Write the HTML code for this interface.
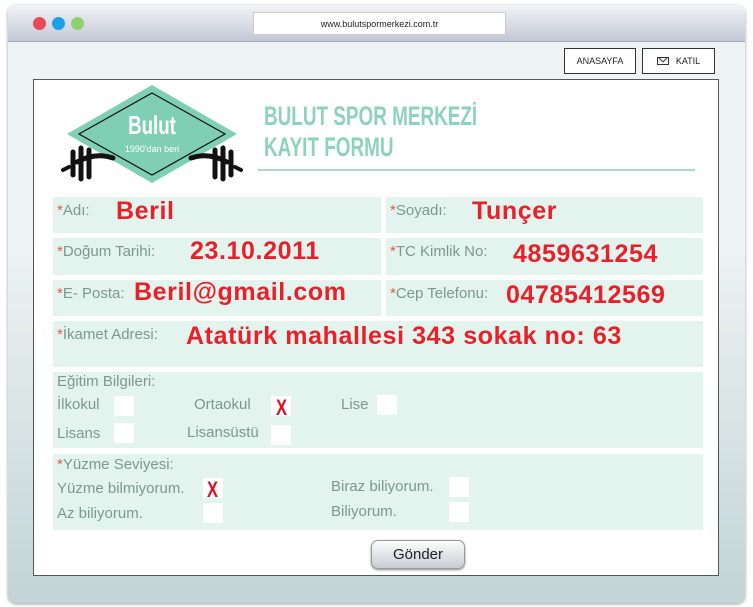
<!DOCTYPE html>
<html><head><meta charset="utf-8"><style>
*{margin:0;padding:0;box-sizing:border-box}
body{width:753px;height:607px;background:#fff;position:relative;overflow:hidden;font-family:"Liberation Sans",sans-serif}
.frame{position:absolute;left:8px;top:5px;width:737px;height:598px;border-radius:8px;background:linear-gradient(#eef3f3 40%,#c2d4d6);box-shadow:0 1px 3px #999;overflow:hidden}
.bar{position:absolute;left:0;top:0;width:100%;height:37px;background:linear-gradient(#f2f3f6,#c3c8d6);border-bottom:1px solid #aab}
.dot{position:absolute;top:12px;width:13px;height:13px;border-radius:50%}
.url{position:absolute;left:245px;top:7px;width:253px;height:23px;background:#fff;border:1px solid #ccc;font-size:9px;text-align:center;line-height:22px;color:#222}
.btn{position:absolute;top:43px;height:26px;border:1px solid #333;background:#fff;font-size:9px;line-height:24px;text-align:center;color:#222}
.inner{position:absolute;left:25px;top:74px;width:686px;height:497px;background:#fff;border:1px solid #555}
.f{position:absolute;background:#e3f3ed;color:#7a9a8f;font-size:15px}
.f .l{position:absolute;left:4px;top:5px}
.f .l b{color:#e25a4a;font-weight:normal}
.v{position:absolute;color:#e8202a;font-weight:bold;font-size:25px;letter-spacing:.6px}
.cb{position:absolute;width:20px;height:20px;background:#fff}
.x{position:absolute;color:#e01020;font-weight:bold;font-size:22px;transform:scaleX(.75);transform-origin:left}
.t{position:absolute;font-size:15px;color:#7a9a8f}
</style></head><body>
<div class="frame">
<div class="bar">
<div class="dot" style="left:25px;background:#e94a5a"></div>
<div class="dot" style="left:44px;background:#1ea0e8"></div>
<div class="dot" style="left:63px;background:#8fd070"></div>
<div class="url">www.bulutspormerkezi.com.tr</div>
</div>
<div class="btn" style="left:556px;width:72px">ANASAYFA</div>
<div class="btn" style="left:634px;width:73px"><span style="display:inline-block;width:12px;height:8px;border:1px solid #333;vertical-align:-1px;margin-right:7px;position:relative;overflow:hidden"><span style="position:absolute;left:1px;top:-5px;width:8px;height:8px;border:1px solid #333;transform:rotate(45deg)"></span></span>KATIL</div>
</div>
<div class="inner" style="left:33px;top:79px"></div>
<svg style="position:absolute;left:55px;top:82px" width="195" height="105">
<polygon points="97,3 182,52 97,101 12,52" fill="#7fcfb4"/>
<polygon points="97,11 170,52 97,93 24,52" fill="none" stroke="#111" stroke-width="1.2"/>
<text x="97" y="52" font-family="Liberation Sans" font-weight="bold" font-size="26" fill="#fff" text-anchor="middle" transform="translate(97,0) scale(0.72,1) translate(-97,0)">Bulut</text>
<text x="97" y="70" font-size="9" fill="#fff" text-anchor="middle" font-family="Liberation Sans">1990'dan beri</text>
<g stroke="#111" stroke-linecap="round" fill="none">
<path d="M22,80 Q40,70 58,76" stroke-width="5"/><path d="M172,80 Q154,70 136,76" stroke-width="5"/>
<path d="M18,70 V93 M26,66 V97 M34,68 V95" stroke-width="5"/>
<path d="M176,70 V93 M168,66 V97 M160,68 V95" stroke-width="5"/>
<path d="M8,88 L14,85 M186,88 L180,85" stroke-width="4"/>
</g></svg>
<div style="position:absolute;left:264px;top:101px;color:#8dd3bb;font-family:'Liberation Sans',sans-serif;font-weight:bold;font-size:27px;line-height:31px;transform:scaleX(.7);transform-origin:left;white-space:nowrap">BULUT SPOR MERKEZİ<br>KAYIT FORMU</div>
<div style="position:absolute;left:258px;top:169px;width:437px;height:2px;background:#a8dcca"></div>

<div class="f" style="left:53px;top:197px;width:328px;height:36px"><span class="l"><b>*</b>Adı:</span></div>
<div class="v" style="left:116px;top:197px">Beril</div>
<div class="f" style="left:386px;top:197px;width:317px;height:36px"><span class="l"><b>*</b>Soyadı:</span></div>
<div class="v" style="left:472px;top:197px">Tunçer</div>
<div class="f" style="left:53px;top:238px;width:328px;height:37px"><span class="l"><b>*</b>Doğum Tarihi:</span></div>
<div class="v" style="left:190px;top:237px">23.10.2011</div>
<div class="f" style="left:386px;top:238px;width:317px;height:37px"><span class="l"><b>*</b>TC Kimlik No:</span></div>
<div class="v" style="left:513px;top:240px">4859631254</div>
<div class="f" style="left:53px;top:280px;width:328px;height:36px"><span class="l"><b>*</b>E- Posta:</span></div>
<div class="v" style="left:134px;top:278px">Beril@gmail.com</div>
<div class="f" style="left:386px;top:280px;width:317px;height:36px"><span class="l"><b>*</b>Cep Telefonu:</span></div>
<div class="v" style="left:506px;top:281px">04785412569</div>
<div class="f" style="left:53px;top:321px;width:650px;height:46px"><span class="l"><b>*</b>İkamet Adresi:</span></div>
<div class="v" style="left:186px;top:322px">Atatürk mahallesi 343 sokak no: 63</div>

<div class="f" style="left:53px;top:372px;width:650px;height:76px"><span class="l" style="top:1px">Eğitim Bilgileri:</span></div>
<div class="t" style="left:57px;top:396px">İlkokul</div><div class="cb" style="left:114px;top:396px"></div>
<div class="t" style="left:194px;top:396px">Ortaokul</div><div class="cb" style="left:271px;top:396px"></div><div class="x" style="left:276px;top:395px">X</div>
<div class="t" style="left:341px;top:396px">Lise</div><div class="cb" style="left:377px;top:395px"></div>
<div class="t" style="left:57px;top:425px">Lisans</div><div class="cb" style="left:114px;top:423px"></div>
<div class="t" style="left:187px;top:424px">Lisansüstü</div><div class="cb" style="left:271px;top:425px"></div>

<div class="f" style="left:53px;top:454px;width:650px;height:76px"><span class="l" style="top:2px"><b>*</b>Yüzme Seviyesi:</span></div>
<div class="t" style="left:57px;top:480px">Yüzme bilmiyorum.</div><div class="cb" style="left:203px;top:478px"></div><div class="x" style="left:207px;top:477px">X</div>
<div class="t" style="left:331px;top:478px">Biraz biliyorum.</div><div class="cb" style="left:449px;top:477px"></div>
<div class="t" style="left:57px;top:505px">Az biliyorum.</div><div class="cb" style="left:203px;top:503px"></div>
<div class="t" style="left:331px;top:503px">Biliyorum.</div><div class="cb" style="left:449px;top:502px"></div>

<div style="position:absolute;left:371px;top:540px;width:94px;height:29px;border-radius:7px;border:1px solid #999;background:linear-gradient(#fdfdfd,#c9ccd3);box-shadow:0 1px 2px #888;text-align:center;line-height:27px;font-size:15px;color:#222">Gönder</div>
</body></html>
